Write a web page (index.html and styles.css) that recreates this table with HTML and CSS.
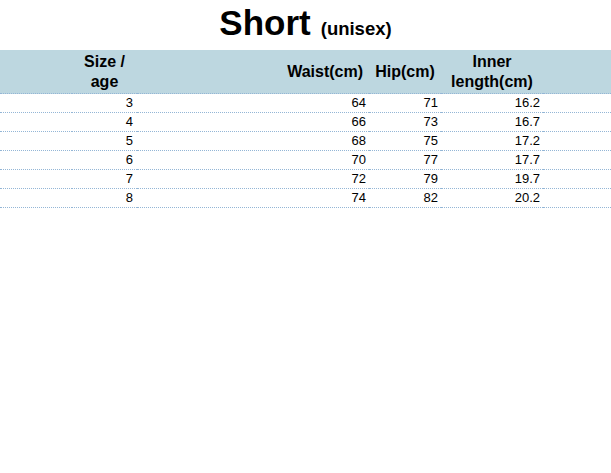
FILE: index.html
```html
<!DOCTYPE html>
<html>
<head>
<meta charset="utf-8">
<link rel="stylesheet" href="styles.css">
</head>
<body>
<div class="title"><span class="main">Short</span><span class="sub">(unisex)</span></div>
<table class="sizes">
  <colgroup>
    <col class="c0"><col class="c1"><col class="c2"><col class="c3"><col class="c4"><col class="c5">
  </colgroup>
  <thead>
    <tr>
      <th></th>
      <th class="center">Size /<br>age</th>
      <th class="right">Waist(cm)</th>
      <th class="center">Hip(cm)</th>
      <th class="center">Inner<br>length(cm)</th>
      <th></th>
    </tr>
  </thead>
  <tbody>
    <tr><td></td><td>3</td><td>64</td><td>71</td><td>16.2</td><td></td></tr>
    <tr><td></td><td>4</td><td>66</td><td>73</td><td>16.7</td><td></td></tr>
    <tr><td></td><td>5</td><td>68</td><td>75</td><td>17.2</td><td></td></tr>
    <tr><td></td><td>6</td><td>70</td><td>77</td><td>17.7</td><td></td></tr>
    <tr><td></td><td>7</td><td>72</td><td>79</td><td>19.7</td><td></td></tr>
    <tr><td></td><td>8</td><td>74</td><td>82</td><td>20.2</td><td></td></tr>
  </tbody>
</table>
</body>
</html>
```
FILE: styles.css
```css
html, body {
  margin: 0;
  padding: 0;
  background: #ffffff;
}
body {
  font-family: "Liberation Sans", Arial, sans-serif;
  color: #000;
}
.title {
  box-sizing: border-box;
  height: 50px;
  padding-top: 5px;
  display: flex;
  justify-content: center;
  align-items: baseline;
  line-height: 35px;
}
.title .main {
  font-size: 35px;
  font-weight: bold;
}
.title .sub {
  font-size: 18.5px;
  font-weight: bold;
  margin-left: 10px;
}
.sizes {
  width: 611px;
  table-layout: fixed;
  border-collapse: collapse;
  border-spacing: 0;
}
.c0 { width: 72px; }
.c1 { width: 65px; }
.c2 { width: 232px; }
.c3 { width: 72px; }
.c4 { width: 102px; }
.sizes th {
  background: #bdd7e0;
  font-size: 16px;
  font-weight: bold;
  line-height: 20px;
  height: 43px;
  padding: 0;
  border-bottom: 1px dotted #94b6d6;
  vertical-align: middle;
  white-space: nowrap;
}
.sizes th.center { text-align: center; }
.sizes th.right { text-align: right; padding-right: 6px; }
.sizes td {
  font-size: 13px;
  line-height: 18px;
  height: 18px;
  padding: 0 4px 0 0;
  text-align: right;
  border-bottom: 1px dotted #94b6d6;
}
.sizes td:nth-child(3) { padding-right: 3px; }
.sizes td:nth-child(4) { padding-right: 3px; }
.sizes td:nth-child(5) { padding-right: 3px; }
```
